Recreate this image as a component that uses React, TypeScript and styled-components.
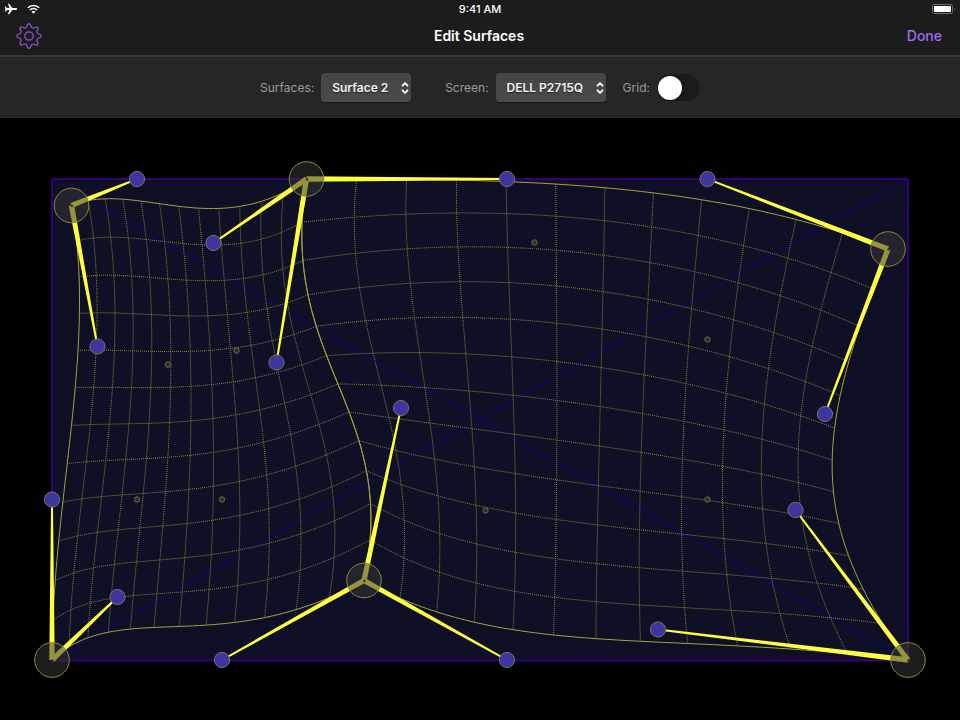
import React, { useState } from "react";
import styled, { createGlobalStyle } from "styled-components";

type Point = [number, number];
type Patch = Point[][];

const GlobalStyle = createGlobalStyle`
  * { box-sizing: border-box; }
  body {
    margin: 0;
    background: #000;
    color: #fff;
    font-family: Inter, "Liberation Sans", sans-serif;
  }
`;

const Page = styled.div`
  display: flex;
  flex-direction: column;
  min-height: 100vh;
`;

const Header = styled.header`
  background: #1c1c1c;
  border-bottom: 2px solid #383838;
`;

const StatusBar = styled.div`
  display: grid;
  grid-template-columns: 1fr auto 1fr;
  align-items: center;
  height: 18px;
  padding: 0 4px;
  font-size: 11px;
  font-weight: 500;
  line-height: 18px;
`;

const StatusGroup = styled.div<{ $end?: boolean }>`
  display: flex;
  align-items: center;
  gap: 9px;
  justify-content: ${(p) => (p.$end ? "flex-end" : "flex-start")};
`;

const NavBar = styled.div`
  display: grid;
  grid-template-columns: 1fr auto 1fr;
  align-items: center;
  height: 36px;
  margin-bottom: 1px;
  padding: 0 18px 0 16px;
`;

const Title = styled.h1`
  margin: 0;
  font-size: 14px;
  font-weight: 600;
  line-height: 20px;
`;

const PlainButton = styled.button<{ $end?: boolean }>`
  display: flex;
  justify-self: ${(p) => (p.$end ? "end" : "start")};
  padding: 0;
  border: 0;
  background: none;
  color: #a26bf5;
  font: 500 14px/20px Inter, "Liberation Sans", sans-serif;
  cursor: pointer;
`;

const Toolbar = styled.div`
  display: flex;
  flex-wrap: wrap;
  align-items: center;
  justify-content: center;
  min-height: 61px;
  padding: 15px 16px;
  background: #262626;
  color: #9b9b9b;
  font-size: 12px;
`;

const Field = styled.div<{ $after: number }>`
  display: flex;
  align-items: center;
  gap: 7px;
  margin-right: ${(p) => p.$after}px;
`;

const SelectBox = styled.div`
  display: grid;
  align-items: center;
  border-radius: 4px;
  background: linear-gradient(#454545, #4a4a4a);
  box-shadow: 0 1px 1px #161616;

  > * { grid-area: 1 / 1; }
  > svg { justify-self: end; margin-right: 2px; pointer-events: none; }
`;

const Select = styled.select`
  appearance: none;
  height: 29px;
  padding: 0 22px 0 11px;
  border: 0;
  border-radius: 4px;
  background: transparent;
  color: #f4f4f4;
  font: 600 12px/29px Inter, "Liberation Sans", sans-serif;
  text-shadow: 0 1px 1px #222;

  option { background: #454545; }
`;

const Switch = styled.input`
  appearance: none;
  display: flex;
  align-items: center;
  width: 43px;
  height: 27px;
  margin: 0;
  padding: 0 1px;
  border-radius: 14px;
  background: #1b1b1b;
  cursor: pointer;

  &::before {
    content: "";
    width: 24px;
    height: 24px;
    border-radius: 50%;
    background: #fff;
    box-shadow: 0 1px 2px #0008;
  }
  &:checked { justify-content: flex-end; background: #7b4fd0; }
`;

const Stage = styled.main`
  display: flex;
  flex: 1;
`;

const Canvas = styled.svg`
  display: block;
  flex: 1;
  width: 100%;
`;

const leftPatch: Patch = [
  [[71.5, 205.5], [137, 179], [213.5, 243], [306.5, 179]],
  [[97.5, 346.5], [168, 364.5], [236.5, 350.5], [276.5, 362.5]],
  [[52, 499.5], [137, 499.5], [222, 499.5], [401, 408]],
  [[52, 660], [117.5, 597], [222, 660], [364, 580.5]],
];

const rightPatch: Patch = [
  [[306.5, 179], [507, 179], [707.5, 179], [888, 249]],
  [[276.5, 362.5], [534.5, 242.5], [707.5, 339.5], [825, 414]],
  [[401, 408], [485.5, 510.5], [707.5, 499.5], [795.5, 510]],
  [[364, 580.5], [507, 660], [658, 629.5], [908, 660]],
];

const DIVISIONS = 12;

const basis = (t: number) => {
  const s = 1 - t;
  return [s * s * s, 3 * s * s * t, 3 * s * t * t, t * t * t];
};

const evaluate = (patch: Patch, u: number, v: number): Point => {
  const bu = basis(u);
  const bv = basis(v);
  let x = 0;
  let y = 0;
  patch.forEach((row, j) =>
    row.forEach((p, i) => {
      x += p[0] * bu[i] * bv[j];
      y += p[1] * bu[i] * bv[j];
    })
  );
  return [x, y];
};

const curve = (at: (t: number) => Point) =>
  Array.from({ length: 49 }, (_, i) => at(i / 48))
    .map(([x, y], i) => `${i ? "L" : "M"}${x.toFixed(2)} ${y.toFixed(2)}`)
    .join("");

const steps = Array.from({ length: DIVISIONS + 1 }, (_, i) => i);

function Grid({ patch }: { patch: Patch }) {
  return (
    <g fill="none" strokeWidth="1">
      {steps.map((i) => {
        const k = i / DIVISIONS;
        const edge = i === 0 || i === DIVISIONS;
        const stroke = edge ? "#a5a23e" : "#88863f";
        const dash = edge ? undefined : "1 1";
        return (
          <React.Fragment key={i}>
            <path d={curve((t) => evaluate(patch, t, k))} stroke={stroke} strokeDasharray={dash} />
            <path d={curve((t) => evaluate(patch, k, t))} stroke={stroke} strokeDasharray={dash} />
          </React.Fragment>
        );
      })}
    </g>
  );
}

const arms: [Point, Point][] = [
  [leftPatch[0][0], leftPatch[0][1]],
  [leftPatch[0][0], leftPatch[1][0]],
  [leftPatch[0][3], leftPatch[0][2]],
  [leftPatch[0][3], leftPatch[1][3]],
  [leftPatch[0][3], rightPatch[0][1]],
  [leftPatch[3][0], leftPatch[2][0]],
  [leftPatch[3][0], leftPatch[3][1]],
  [leftPatch[3][3], leftPatch[3][2]],
  [leftPatch[3][3], leftPatch[2][3]],
  [leftPatch[3][3], rightPatch[3][1]],
  [rightPatch[0][3], rightPatch[0][2]],
  [rightPatch[0][3], rightPatch[1][3]],
  [rightPatch[3][3], rightPatch[2][3]],
  [rightPatch[3][3], rightPatch[3][2]],
];

const taper = ([a, b]: [Point, Point]) => {
  const dx = b[0] - a[0];
  const dy = b[1] - a[1];
  const len = Math.hypot(dx, dy);
  const nx = -dy / len;
  const ny = dx / len;
  return [
    [a[0] + nx * 2.7, a[1] + ny * 2.7],
    [b[0] + nx * 0.9, b[1] + ny * 0.9],
    [b[0] - nx * 0.9, b[1] - ny * 0.9],
    [a[0] - nx * 2.7, a[1] - ny * 2.7],
  ].map((p) => p.join(",")).join(" ");
};

const anchors = [leftPatch[0][0], leftPatch[0][3], leftPatch[3][0], leftPatch[3][3], rightPatch[0][3], rightPatch[3][3]];

const innerPoints = [leftPatch, rightPatch].flatMap((p) => [
  { at: p[1][1], dir: 1 },
  { at: p[1][2], dir: 1 },
  { at: p[2][1], dir: -1 },
  { at: p[2][2], dir: -1 },
]);

function SurfaceCanvas() {
  return (
    <Canvas viewBox="0 118 960 602" role="img" aria-label="Surface mesh">
      <rect x="52" y="179" width="856" height="481.5" fill="#0f0f25" stroke="#35007a" strokeWidth="2" />
      <path d="M52 179 908 660M908 179 52 660" stroke="#150082" strokeWidth="1" />
      <Grid patch={leftPatch} />
      <Grid patch={rightPatch} />
      {innerPoints.map(({ at: [x, y], dir }, i) => (
        <g key={i} fill="#2c2c2b" stroke="#706e3a">
          <path d={`M${x} ${y}v${dir * 7}`} stroke="#1b1a2b" />
          <circle cx={x} cy={y} r="2.7" />
        </g>
      ))}
      {arms.map((arm, i) => (
        <polygon key={i} points={taper(arm)} fill="#ffff42" />
      ))}
      {anchors.map(([x, y], i) => (
        <g key={i}>
          <circle cx={x} cy={y} r="17.3" fill="#373737" fillOpacity="0.53" stroke="#8c893c" />
          <circle cx={x + 0.5} cy={y + 0.5} r="1.2" fill="#34321e" />
        </g>
      ))}
      {arms.map(([, [x, y]], i) => (
        <circle key={i} cx={x} cy={y} r="7.6" fill="#3d36a0" stroke="#77745f" />
      ))}
    </Canvas>
  );
}

const gearPath = (() => {
  const at = (r: number, a: number) => `${(13 + r * Math.cos(a)).toFixed(2)} ${(13 + r * Math.sin(a)).toFixed(2)}`;
  let d = "";
  for (let i = 0; i < 8; i++) {
    const a = (i * Math.PI) / 4;
    d += `${i ? "L" : "M"}${at(9.8, a - 0.21)}Q${at(10.4, a - 0.16)} ${at(11.4, a - 0.13)}`;
    d += `Q${at(12.3, a - 0.11)} ${at(12.1, a)}Q${at(12.3, a + 0.11)} ${at(11.4, a + 0.13)}`;
    d += `Q${at(10.4, a + 0.16)} ${at(9.8, a + 0.21)}`;
    d += `Q${at(9.2, a + 0.28)} ${at(8.7, a + 0.3927)}Q${at(9.2, a + 0.505)} ${at(9.8, a + 0.575)}`;
  }
  return d + "Z";
})();

const GearIcon = () => (
  <svg width="26" height="26" viewBox="0 0 26 26" fill="none" stroke="#8c58d8" strokeWidth="1.2" strokeLinejoin="round">
    <path d={gearPath} />
    <circle cx="13" cy="13" r="4.2" />
  </svg>
);

const PlaneIcon = () => (
  <svg width="14" height="12" viewBox="0 0 14 12" fill="#fff">
    <path d="M13.2 6c0-.6-.9-1-2-1H8.4L5.1.8H3.9L5.5 5H3L1.6 3.4H.9L1.4 6 .9 8.600h.7L3 7h2.500l-1.600 4.200h1.200L8.400 7h2.800c1.100 0 2-.4 2-1Z" />
  </svg>
);

const WifiIcon = () => (
  <svg width="13" height="10" viewBox="0 0 13 10" fill="none" stroke="#fff" strokeWidth="1.6">
    <path d="M.8 3.8a8.1 8.1 0 0 1 11.4 0M2.9 6a5.1 5.1 0 0 1 7.2 0" />
    <path d="M4.6 7.7a2.7 2.7 0 0 1 3.8 0L6.5 9.7Z" fill="#fff" stroke="none" />
  </svg>
);

const BatteryIcon = () => (
  <svg width="24" height="10" viewBox="0 0 24 10">
    <rect x=".5" y=".5" width="20" height="9" rx="2" fill="none" stroke="#707070" />
    <rect x="2" y="2" width="17" height="6" rx="1" fill="#fff" />
    <path d="M22 3.5q1.5 1.5 0 3Z" fill="#808080" />
  </svg>
);

const Chevrons = () => (
  <svg width="8" height="14" viewBox="0 0 8 14" fill="none" stroke="#fff" strokeWidth="1.8" strokeLinecap="round" strokeLinejoin="round">
    <path d="M1.5 4.7 4 2l2.5 2.7M1.5 9.3 4 12l2.5-2.7" />
  </svg>
);

export default function App() {
  const [grid, setGrid] = useState(false);
  return (
    <Page>
      <GlobalStyle />
      <Header>
        <StatusBar>
          <StatusGroup><PlaneIcon /><WifiIcon /></StatusGroup>
          <span>9:41 AM</span>
          <StatusGroup $end><BatteryIcon /></StatusGroup>
        </StatusBar>
        <NavBar>
          <PlainButton aria-label="Settings"><GearIcon /></PlainButton>
          <Title>Edit Surfaces</Title>
          <PlainButton $end>Done</PlainButton>
        </NavBar>
      </Header>
      <Toolbar>
        <Field $after={34}>
          <label htmlFor="surface">Surfaces:</label>
          <SelectBox>
            <Select id="surface" defaultValue="Surface 2"><option>Surface 2</option></Select>
            <Chevrons />
          </SelectBox>
        </Field>
        <Field $after={17}>
          <label htmlFor="screen">Screen:</label>
          <SelectBox>
            <Select id="screen" defaultValue="DELL P2715Q"><option>DELL P2715Q</option></Select>
            <Chevrons />
          </SelectBox>
        </Field>
        <Field $after={0}>
          <label htmlFor="grid">Grid:</label>
          <Switch id="grid" type="checkbox" role="switch" checked={grid} onChange={(e) => setGrid(e.target.checked)} />
        </Field>
      </Toolbar>
      <Stage><SurfaceCanvas /></Stage>
    </Page>
  );
}
